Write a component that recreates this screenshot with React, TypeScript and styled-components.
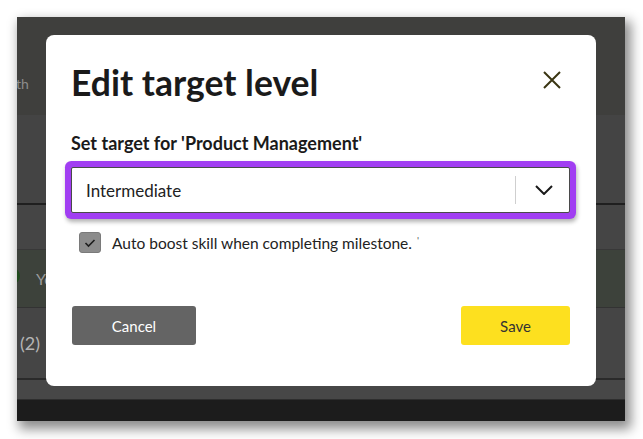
import React from 'react';
import styled, { createGlobalStyle } from 'styled-components';

const Global = createGlobalStyle`
  html, body { margin: 0; padding: 0; background: #ffffff; }
  body { font-family: Lato, "Noto Sans", sans-serif; }
  * { box-sizing: border-box; }
`;

const Page = styled.div`
  width: 643px;
  height: 439px;
  padding: 17px 18px 18px 17px;
  background: #ffffff;
`;

const Shot = styled.div`
  position: relative;
  width: 608px;
  height: 404px;
  overflow: hidden;
  display: flex;
  flex-direction: column;
  background: #444444;
  box-shadow: 4px 6px 11px 2px rgba(0, 0, 0, 0.45);
`;

const Band = styled.div<{ $bg: string; $h: number; $line?: string; $lineW?: number; $pt?: number }>`
  flex: none;
  height: ${(p) => p.$h}px;
  background: ${(p) => p.$bg};
  border-bottom: ${(p) => (p.$line ? `${p.$lineW ?? 1}px solid ${p.$line}` : 'none')};
  padding-top: ${(p) => p.$pt ?? 0}px;
  display: flex;
  align-items: center;
  overflow: hidden;
`;

const FaintText = styled.span<{ $size?: number; $color?: string; $ml?: number }>`
  font-size: ${(p) => p.$size ?? 14}px;
  color: ${(p) => p.$color ?? '#8a8a8a'};
  margin-left: ${(p) => p.$ml ?? 0}px;
  white-space: nowrap;
`;

const Dot = styled.span`
  width: 16px;
  height: 16px;
  border-radius: 50%;
  background: #1f4a1c;
  margin: -6px 0 0 -13px;
  flex: none;
`;

const FooterBand = styled.div`
  flex: 1;
  background: #1c1c1c;
  border-top: 1px solid #2e2e2e;
  padding: 15px 0 0 388px;
  overflow: hidden;
`;

const Modal = styled.div`
  position: absolute;
  left: 29px;
  top: 18px;
  width: 550px;
  height: 351px;
  background: #ffffff;
  border-radius: 8px;
  padding: 28px 26px 0 25px;
  display: flex;
  flex-direction: column;
`;

const Header = styled.div`
  display: flex;
  justify-content: space-between;
  align-items: flex-start;
`;

const Title = styled.h1`
  margin: 0;
  font-size: 35.5px;
  line-height: 40px;
  font-weight: 700;
  color: #1a1a1a;
`;

const CloseButton = styled.button`
  border: none;
  background: none;
  padding: 0;
  margin: 8px 9px 0 0;
  width: 18px;
  height: 18px;
  display: flex;
  cursor: pointer;
`;

const Label = styled.div`
  margin-top: 30px;
  font-size: 18px;
  line-height: 20px;
  font-weight: 700;
  color: #1a1a1a;
`;

const Select = styled.div`
  margin: 14px 0 0 0;
  height: 46px;
  border: 1px solid #4a4a4a;
  border-radius: 2px;
  display: flex;
  align-items: center;
  background: #fff;
  box-shadow: 0 0 0 6px #a13ef2, 1px 3px 4px 6px rgba(0, 0, 0, 0.3);
`;

const SelectValue = styled.span`
  flex: 1;
  padding-left: 14px;
  font-size: 17px;
  color: #222;
`;

const Separator = styled.span`
  width: 1px;
  height: 28px;
  background: #cfcfcf;
`;

const ChevronWrap = styled.span`
  width: 53px;
  display: flex;
  justify-content: center;
  padding-left: 2px;
`;

const CheckRow = styled.label`
  margin: 19px 0 0 8px;
  display: flex;
  align-items: center;
  gap: 11px;
  font-size: 15.5px;
  color: #222;
`;

const Box = styled.span`
  width: 22px;
  height: 21px;
  border-radius: 3px;
  background: #8c8c8c;
  border: 1px solid #7a7a7a;
  display: flex;
  align-items: center;
  justify-content: center;
  flex: none;
`;

const Tick = styled.span`
  font-size: 10px;
  color: #555;
  margin-left: -6px;
  align-self: flex-start;
  margin-top: 2px;
`;

const Actions = styled.div`
  margin-top: 53px;
  display: flex;
  justify-content: space-between;
  margin-left: 1px;
`;

const Button = styled.button<{ $variant: 'cancel' | 'save' }>`
  height: 39px;
  width: ${(p) => (p.$variant === 'cancel' ? 124 : 109)}px;
  border: none;
  border-radius: 3px;
  font-family: Lato, "Noto Sans", sans-serif;
  font-size: 15px;
  background: ${(p) => (p.$variant === 'cancel' ? '#646464' : '#fde01f')};
  color: ${(p) => (p.$variant === 'cancel' ? '#ffffff' : '#333333')};
  cursor: pointer;
`;

export default function App() {
  return (
    <>
      <Global />
      <Page>
        <Shot>
          <Band $bg="#3f3f3d" $h={98} $pt={34}>
            <FaintText $color="#8c8c8c" $ml={-1}>th</FaintText>
          </Band>
          <Band $bg="#444444" $h={90} $line="#1f1f1f" $lineW={2} />
          <Band $bg="#454545" $h={45} $line="#383838" />
          <Band $bg="#3d423b" $h={58} $line="#333333">
            <Dot />
            <FaintText $color="#9a9a9a" $size={16} $ml={16}>You</FaintText>
          </Band>
          <Band $bg="#454545" $h={72} $line="#2a2a2a" $lineW={2}>
            <FaintText $color="#b5b5b5" $size={18} $ml={3}>(2)</FaintText>
          </Band>
          <Band $bg="#474747" $h={19} />
          <FooterBand>
            <FaintText $color="#7a7a7a" $size={14}>Target level</FaintText>
          </FooterBand>

          <Modal role="dialog">
            <Header>
              <Title>Edit target level</Title>
              <CloseButton aria-label="Close">
                <svg width="18" height="18" viewBox="0 0 18 18">
                  <path d="M1 1 L17 17 M17 1 L1 17" stroke="#3a3512" strokeWidth="2" fill="none" />
                </svg>
              </CloseButton>
            </Header>
            <Label>Set target for 'Product Management'</Label>
            <Select>
              <SelectValue>Intermediate</SelectValue>
              <Separator />
              <ChevronWrap>
                <svg width="18" height="10" viewBox="0 0 18 10">
                  <path d="M1 1 L9 9 L17 1" stroke="#1a1a1a" strokeWidth="2" fill="none" />
                </svg>
              </ChevronWrap>
            </Select>
            <CheckRow>
              <Box>
                <svg width="12" height="10" viewBox="0 0 12 10">
                  <path d="M1.5 5 L4.5 8 L10.5 2" stroke="#1e1e1e" strokeWidth="1.6" fill="none" />
                </svg>
              </Box>
              <span>Auto boost skill when completing milestone.</span>
              <Tick>'</Tick>
            </CheckRow>
            <Actions>
              <Button $variant="cancel">Cancel</Button>
              <Button $variant="save">Save</Button>
            </Actions>
          </Modal>
        </Shot>
      </Page>
    </>
  );
}
